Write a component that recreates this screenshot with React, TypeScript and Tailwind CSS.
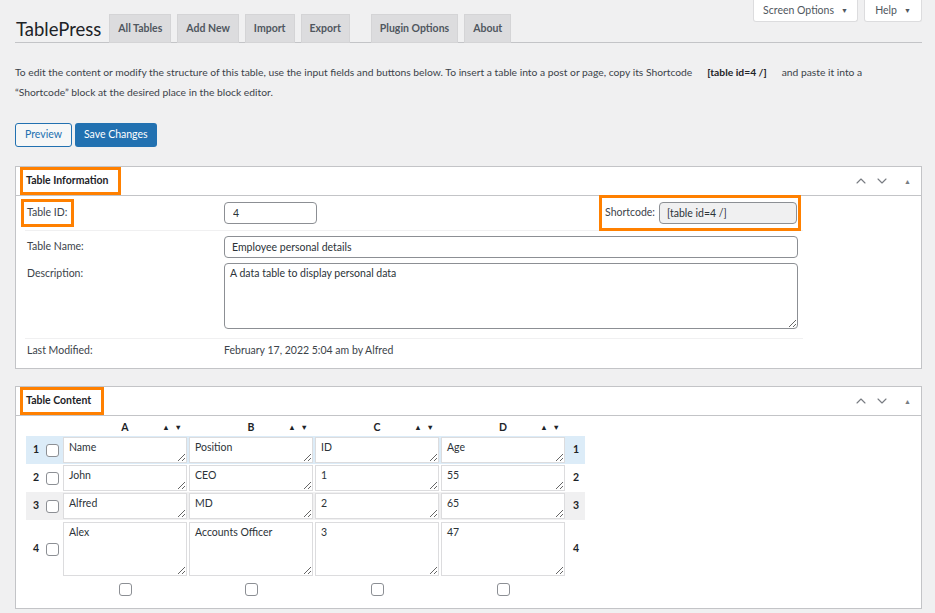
import { ChevronUp, ChevronDown } from "lucide-react";

const cols = ["A", "B", "C", "D"];

const rows = [
  { cells: ["Name", "Position", "ID", "Age"], bg: "bg-[#dcecf8]", tall: false },
  { cells: ["John", "CEO", "1", "55"], bg: "bg-white", tall: false },
  { cells: ["Alfred", "MD", "2", "65"], bg: "bg-[#f0f0f1]", tall: false },
  { cells: ["Alex", "Accounts Officer", "3", "47"], bg: "bg-white", tall: true },
];

const tabs = ["All Tables", "Add New", "Import", "Export"];

function Checkbox() {
  return (
    <input
      type="checkbox"
      className="appearance-none w-[13px] h-[13px] border border-[#8c8f94] rounded-[3px] bg-white"
    />
  );
}

function PostboxHeader({ title }: { title: string }) {
  return (
    <div className="flex h-[29px] items-center border-b border-[#c3c4c7] pl-[4px] pr-[10px]">
      <span className="inline-block border-[3px] border-[#ff8000] pl-[3px] pr-[10px] py-[3px] font-bold text-[#1d2327]">
        {title}
      </span>
      <div className="ml-auto flex items-center gap-[5px] text-[#787c82]">
        <ChevronUp size={16} strokeWidth={1.7} />
        <ChevronDown size={16} strokeWidth={1.7} />
        <span className="ml-[9px] text-[7px]">▲</span>
      </div>
    </div>
  );
}

export default function App() {
  return (
    <div className="min-h-screen bg-[#f0f0f1] pl-[15px] pr-[13px] font-['Lato',sans-serif] text-[10.5px] text-[#3c434a]">
      {/* top bar */}
      <div className="flex border-b border-[#c3c4c7]">
        <div className="flex items-end pt-[14px]">
          <h1 className="mr-[8px] ml-px self-center pt-[2px] text-[18.5px] leading-none text-[#1d2327]">TablePress</h1>
          <div className="flex gap-[6px]">
            {tabs.map((t) => (
              <span
                key={t}
                className="-mb-px flex h-[29px] items-center border border-[#d4d4d6] bg-[#dcdcde] px-[8px] font-bold text-[#50575e]"
              >
                {t}
              </span>
            ))}
          </div>
          <div className="ml-[21px] flex gap-[6px]">
            {["Plugin Options", "About"].map((t) => (
              <span
                key={t}
                className="-mb-px flex h-[29px] items-center border border-[#d4d4d6] bg-[#dcdcde] px-[8px] font-bold text-[#50575e]"
              >
                {t}
              </span>
            ))}
          </div>
        </div>
        <div className="ml-auto flex gap-[6px] self-start">
          <span className="flex h-[22px] w-[105px] items-center justify-center gap-[7px] rounded-b-[3px] border border-t-0 border-[#dcdcde] bg-white text-[#50575e]">
            Screen Options <span className="text-[7px]">▼</span>
          </span>
          <span className="flex h-[22px] w-[58px] items-center justify-center gap-[7px] rounded-b-[3px] border border-t-0 border-[#dcdcde] bg-white text-[#50575e]">
            Help <span className="text-[7px]">▼</span>
          </span>
        </div>
      </div>

      <p className="mt-[19px] whitespace-nowrap text-[10.3px] leading-[20px] text-[#3c434a]">
        To edit the content or modify the structure of this table, use the input fields and buttons below. To insert a
        table into a post or page, copy its Shortcode
        <b className="mx-[15px] font-bold text-[#1d2327]">[table id=4 /]</b>
        and paste it into a
        <br />
        “Shortcode” block at the desired place in the block editor.
      </p>

      <div className="mt-[21px] flex gap-[3px]">
        <button
          type="button"
          className="h-[24px] rounded-[3px] border border-[#2271b1] bg-[#f6f7f7] px-[9px] text-[#2271b1]"
        >
          Preview
        </button>
        <button type="button" className="h-[24px] rounded-[3px] bg-[#2271b1] px-[9px] text-white">
          Save Changes
        </button>
      </div>

      {/* Table Information */}
      <div className="mt-[19px] border border-[#c3c4c7] bg-white">
        <PostboxHeader title="Table Information" />
        <div className="ml-[9px] w-[778px] pb-[5px]">
          <div className="flex h-[35px] items-center border-b border-[#f0f0f1]">
            <div className="w-[199px] -ml-[4px]">
              <span className="inline-block border-[3px] border-[#ff8000] pl-[3px] pr-[4px] py-[3px]">Table ID:</span>
            </div>
            <input
              readOnly
              value="4"
              className="ml-[4px] h-[22px] w-[93px] rounded-[4px] border border-[#8c8f94] px-[8px] text-[#2c3338] outline-none"
            />
            <span className="ml-auto mr-[2px] flex items-center border-[3px] border-[#ff8000] py-[4px] pl-[3px] pr-[1px]">
              <span className="mr-[4px]">Shortcode:</span>
              <input
                readOnly
                value="[table id=4 /]"
                className="h-[22px] w-[138px] rounded-[4px] border border-[#8c8f94] bg-[#f0f0f1] px-[7px] text-[#2c3338] outline-none"
              />
            </span>
          </div>
          <div className="flex items-center pt-[5px]">
            <span className="w-[199px] pl-[2px]">Table Name:</span>
            <input
              readOnly
              value="Employee personal details"
              className="h-[22px] w-[574px] rounded-[4px] border border-[#8c8f94] px-[7px] text-[#2c3338] outline-none"
            />
          </div>
          <div className="flex border-b border-[#f0f0f1] pt-[5px] pb-[9px]">
            <span className="w-[199px] pl-[2px] pt-[3px]">Description:</span>
            <textarea
              readOnly
              value="A data table to display personal data"
              className="h-[66px] w-[574px] rounded-[4px] border border-[#8c8f94] px-[5px] py-[2px] text-[#2c3338] outline-none"
            />
          </div>
          <div className="flex h-[24px] items-center">
            <span className="w-[199px] pl-[2px]">Last Modified:</span>
            <span>February 17, 2022 5:04 am by Alfred</span>
          </div>
        </div>
      </div>

      {/* Table Content */}
      <div className="mt-[17px] border border-[#c3c4c7] bg-white pb-[12px]">
        <PostboxHeader title="Table Content" />
        <div className="ml-[10px] w-[559px]">
          <div className="grid h-[20px] grid-cols-[16px_20px_126px_126px_126px_126px_19px] items-center pt-[4px]">
            <span />
            <span />
            {cols.map((c) => (
              <div key={c} className="relative flex justify-center font-bold text-[#1d2327]">
                {c}
                <span className="absolute right-[6px] top-[2px] flex gap-[5px] text-[7.5px] text-[#1d2327]">
                  <span>▲</span>
                  <span>▼</span>
                </span>
              </div>
            ))}
            <span />
          </div>
          {rows.map((r, i) => (
            <div
              key={i}
              className={`grid ${r.tall ? "h-[58px]" : "h-[28px]"} grid-cols-[16px_20px_126px_126px_126px_126px_19px] items-center ${r.bg}`}
            >
              <span className="pl-[7px] font-bold text-[#1d2327]">{i + 1}</span>
              <span className="flex items-center justify-center">
                <Checkbox />
              </span>
              {r.cells.map((c, j) => (
                <div key={j} className="pl-px">
                  <textarea
                    readOnly
                    value={c}
                    className={`${r.tall ? "h-[54px]" : "h-[26px]"} block w-[124px] border border-[#dcdcde] bg-white px-[5px] py-[2px] leading-[15px] text-[#2c3338] outline-none`}
                  />
                </div>
              ))}
              <span className="pl-[7px] font-bold text-[#1d2327]">{i + 1}</span>
            </div>
          ))}
          <div className="grid grid-cols-[16px_20px_126px_126px_126px_126px_19px] pt-[5px]">
            <span />
            <span />
            {cols.map((c) => (
              <div key={c} className="flex justify-center">
                <Checkbox />
              </div>
            ))}
            <span />
          </div>
        </div>
      </div>
    </div>
  );
}
